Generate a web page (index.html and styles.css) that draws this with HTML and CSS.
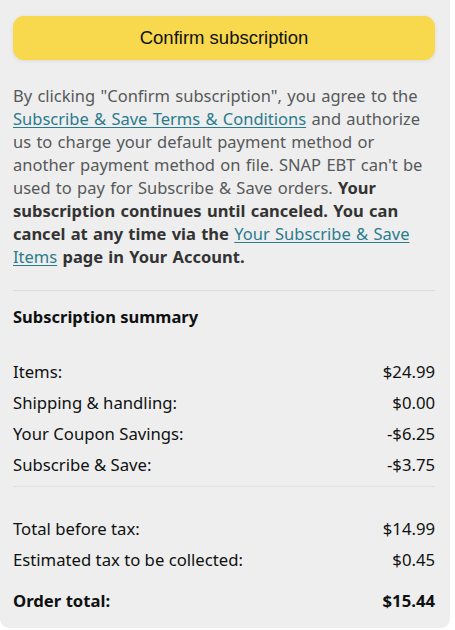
FILE: index.html
```html
<!DOCTYPE html>
<html lang="en">
<head>
    <meta charset="UTF-8">
    <title>Confirm subscription</title>
    <link rel="stylesheet" href="styles.css">
</head>
<body>
    <div class="panel">
        <!-- 确认按钮 -->
        <button class="confirmBtn" type="button">Confirm subscription</button>

        <!-- 条款说明 -->
        <p class="terms">
            By clicking "Confirm subscription", you agree to the
            <a href="javascript:;">Subscribe &amp; Save Terms &amp; Conditions</a>
            and authorize us to charge your default payment method or another payment method on file.
            SNAP EBT can't be used to pay for Subscribe &amp; Save orders.
            <b>Your subscription continues until canceled. You can cancel at any time via the
            <a href="javascript:;">Your Subscribe &amp; Save Items</a> page in Your Account.</b>
        </p>

        <!-- 订阅汇总 -->
        <div class="summary">
            <h3 class="summaryTitle">Subscription summary</h3>
            <ul class="rows">
                <li><span>Items:</span><span>$24.99</span></li>
                <li><span>Shipping &amp; handling:</span><span>$0.00</span></li>
                <li><span>Your Coupon Savings:</span><span>-$6.25</span></li>
                <li><span>Subscribe &amp; Save:</span><span>-$3.75</span></li>
            </ul>
            <ul class="rows totals">
                <li><span>Total before tax:</span><span>$14.99</span></li>
                <li><span>Estimated tax to be collected:</span><span>$0.45</span></li>
                <li class="grand"><span>Order total:</span><span>$15.44</span></li>
            </ul>
        </div>
    </div>
</body>
</html>
```

FILE: styles.css
```css
*{
    margin: 0;
    padding: 0;
    box-sizing: border-box;
}
body{
    background: #fff;
    font-family: "Noto Sans", "Liberation Sans", sans-serif;
}
.panel{
    width: 450px;
    height: 628px;
    background: #eeeeee;
    border-radius: 0 0 9px 9px;
    padding: 16px 15px 0 13px;
}
/* 黄色按钮 */
.confirmBtn{
    display: block;
    width: 422px;
    height: 44px;
    border: none;
    border-radius: 11px;
    background: #f8d84c;
    box-shadow: 0 1px 4px rgba(0,0,0,0.08);
    font-family: "Liberation Sans", Arial, sans-serif;
    font-size: 18.5px;
    color: #111;
}
/* 宽度收窄一点，让换行位置和原图一致 */
.terms{
    width: 414px;
    margin-top: 24px;
    font-size: 16.5px;
    line-height: 23px;
    word-spacing: 1px;
    color: #565959;
}
.terms b{
    color: #333;
}
.terms a{
    color: #2a7b8d;
    text-decoration: underline;
    text-decoration-thickness: 1px;
    text-underline-offset: 2px;
}
.terms b a{
    font-weight: normal;
}
.summary{
    margin-top: 22px;
    border-top: 1px solid #dcdcdc;
    width: 422px;
    color: #0f1111;
}
.summaryTitle{
    font-size: 16.5px;
    line-height: 22px;
    margin-top: 15px;
}
.rows{
    list-style: none;
    padding-top: 28px;
    padding-bottom: 6px;
}
.rows li{
    display: flex;
    justify-content: space-between;
    font-size: 16.7px;
    line-height: 31px;
}
.totals{
    border-top: 1px solid #e0e0e0;
    padding-top: 26px;
}
.rows li.grand{
    font-weight: bold;
    margin-top: 10px;
}
```
